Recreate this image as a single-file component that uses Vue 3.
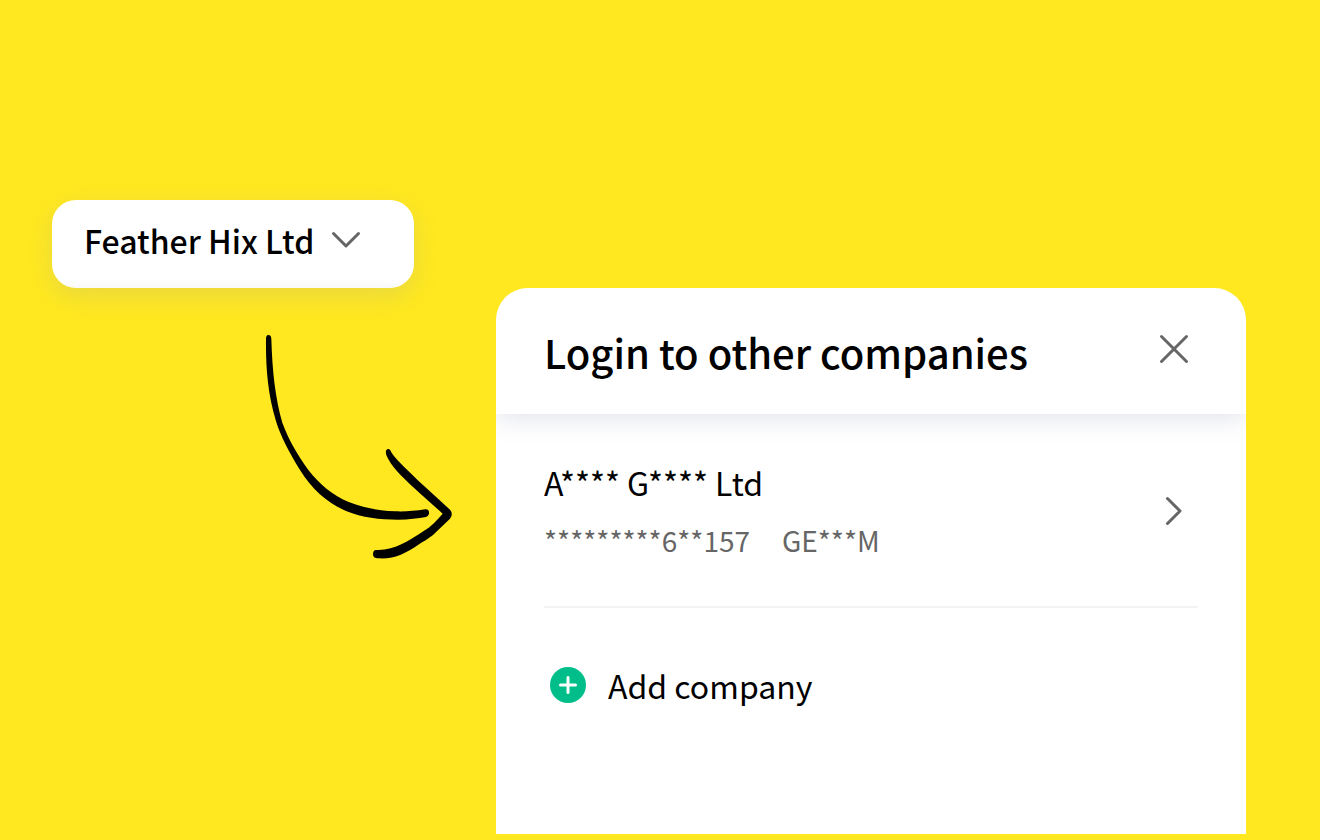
<script setup>
const current = 'Feather Hix Ltd'
const companies = [
  { name: 'A**** G**** Ltd', number: '*********6**157', code: 'GE***M' },
]
</script>

<template>
  <main class="stage">
    <div class="source">
      <button class="switcher" type="button" aria-haspopup="dialog">
        <span>{{ current }}</span>
        <svg class="chevron-down" viewBox="0 0 32 20" aria-hidden="true">
          <path d="M3.500 3.500 16 16 28.500 3.500" />
        </svg>
      </button>
      <svg class="arrow" viewBox="0 0 690 750" aria-hidden="true">
        <path d="M85 45C80 45 78 50 78 57C77 140 83 220 107 300C120 345 146 395 180 450C218 511 262 548 318 573C368 593 418 599 474 599C507 599 535 595 558 591C565 589 568 583 567 576C566 570 562 567 556 568C524 573 496 575 466 574C412 572 366 562 326 546C276 525 239 493 205 450C172 403 146 360 127 308C106 235 97 155 94 57C94 50 91 45 85 45Z" />
        <path d="M443 387C437 389 436 398 440 407C450 430 464 445 481 464C524 507 566 543 608 581C590 602 573 621 550 634C506 663 463 692 410 690C402 689 399 695 399 703C399 711 404 715 413 715C462 719 500 698 535 674C557 660 572 652 586 638L630 596C637 588 637 576 630 569C588 530 545 493 502 450C480 428 466 415 453 395C451 389 448 386 443 387Z" />
      </svg>
    </div>

    <section class="panel" role="dialog" aria-labelledby="panel-title">
      <header class="panel-head">
        <h1 id="panel-title">Login to other companies</h1>
        <button class="close" type="button" aria-label="Close">
          <svg viewBox="0 0 32 32" aria-hidden="true">
            <path d="M3.500 3.500 28.500 28.500M28.500 3.500 3.500 28.500" />
          </svg>
        </button>
      </header>
      <div class="panel-body">
        <button v-for="c in companies" :key="c.name" class="company" type="button">
          <span class="details">
            <span class="name">{{ c.name }}</span>
            <span class="meta"><span>{{ c.number }}</span><span>{{ c.code }}</span></span>
          </span>
          <svg class="chevron-right" viewBox="0 0 20 32" aria-hidden="true">
            <path d="M3.500 3.500 16 16 3.500 28.500" />
          </svg>
        </button>
        <button class="add" type="button">
          <svg viewBox="0 0 36 36" aria-hidden="true">
            <circle cx="18" cy="18" r="18" />
            <path d="M18 10.500V25.500M10.500 18H25.500" />
          </svg>
          <span>Add company</span>
        </button>
      </div>
    </section>
  </main>
</template>

<style>
body {
  background: #ffe81f;
}
</style>

<style scoped>
.stage {
  box-sizing: border-box;
  min-height: 100vh;
  display: grid;
  grid-template-columns: auto 1fr;
  column-gap: 26px;
  padding: 200px 74px 6px 52px;
  background: #ffe81f;
  color: #000;
  font-family: "Noto Sans CJK SC", "Noto Sans", sans-serif;
}

button {
  margin: 0;
  padding: 0;
  border: 0;
  background: none;
  color: inherit;
  font: inherit;
  text-align: left;
  cursor: pointer;
}

svg {
  display: block;
  flex: none;
  fill: none;
  stroke: #666;
  stroke-width: 3;
  stroke-linecap: round;
  stroke-linejoin: round;
}

.source {
  display: flex;
  flex-direction: column;
  align-items: flex-start;
}

.switcher {
  display: flex;
  align-items: center;
  gap: 16px;
  padding: 16px 52px 24px 32px;
  border-radius: 24px;
  background: linear-gradient(to top, #f9f9f9, #fff 10px);
  box-shadow: 0 8px 24px rgba(150, 160, 190, 0.22);
  font-size: 32px;
  line-height: 48px;
  font-weight: 500;
}

.chevron-down {
  width: 32px;
  height: 20px;
}

.arrow {
  width: 230px;
  height: 250px;
  margin: 32px 0 0 188px;
  fill: #000;
  stroke: none;
}

.panel {
  display: flex;
  flex-direction: column;
  margin-top: 88px;
  border-radius: 32px 32px 0 0;
  background: #fff;
  overflow: hidden;
}

.panel-head {
  display: flex;
  align-items: center;
  justify-content: space-between;
  padding: 29px 56px 33px 48px;
  box-shadow: 0 4px 24px rgba(90, 100, 140, 0.18);
}

h1 {
  margin: 0;
  padding-top: 6px;
  font-size: 40px;
  line-height: 58px;
  font-weight: 500;
}

.close svg {
  width: 32px;
  height: 32px;
}

.panel-body {
  padding: 0 48px;
}

.company {
  display: flex;
  align-items: center;
  justify-content: space-between;
  width: 100%;
  padding: 42px 14px 40px 0;
  border-bottom: 2px solid #f3f3f3;
}

.details {
  display: flex;
  flex-direction: column;
  gap: 6px;
}

.name {
  font-size: 32px;
  line-height: 52px;
}

.meta {
  display: flex;
  gap: 32px;
  color: #666;
  font-size: 28px;
  line-height: 52px;
}

.chevron-right {
  width: 20px;
  height: 32px;
}

.add {
  display: flex;
  align-items: center;
  gap: 22px;
  margin-top: 51px;
  padding: 0 6px;
  font-size: 32px;
  line-height: 52px;
}

.add svg {
  width: 36px;
  height: 36px;
  stroke: #fff;
}

.add circle {
  fill: #00be8a;
  stroke: none;
}
</style>
